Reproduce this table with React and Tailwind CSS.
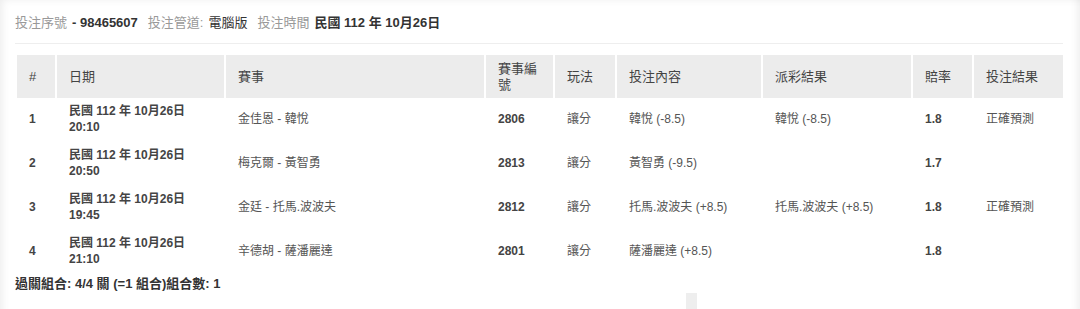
import React from "react";

const rows = [
  { no: 1, date: "民國 112 年 10月26日", time: "20:10", match: "金佳恩 - 韓悅", id: "2806", play: "讓分", bet: "韓悅 (-8.5)", payout: "韓悅 (-8.5)", odds: "1.8", result: "正確預測" },
  { no: 2, date: "民國 112 年 10月26日", time: "20:50", match: "梅克爾 - 黃智勇", id: "2813", play: "讓分", bet: "黃智勇 (-9.5)", payout: "", odds: "1.7", result: "" },
  { no: 3, date: "民國 112 年 10月26日", time: "19:45", match: "金廷 - 托馬.波波夫", id: "2812", play: "讓分", bet: "托馬.波波夫 (+8.5)", payout: "托馬.波波夫 (+8.5)", odds: "1.8", result: "正確預測" },
  { no: 4, date: "民國 112 年 10月26日", time: "21:10", match: "辛德胡 - 薩潘麗達", id: "2801", play: "讓分", bet: "薩潘麗達 (+8.5)", payout: "", odds: "1.8", result: "" },
];

const heads = [
  { label: "#", w: "w-[38px]" },
  { label: "日期", w: "w-[167px]" },
  { label: "賽事", w: "w-[258px]" },
  { label: "賽事編號", w: "w-[67px]" },
  { label: "玩法", w: "w-[60px]" },
  { label: "投注內容", w: "w-[144px]" },
  { label: "派彩結果", w: "w-[148px]" },
  { label: "賠率", w: "w-[59px]" },
  { label: "投注結果", w: "w-[89px]" },
];

export default function App() {
  const td = "h-[42px] pl-3 pr-1 pt-[1px] pb-[5px] align-middle text-[12px]";
  return (
    <div
      className="relative w-full h-[309px] overflow-hidden bg-white text-[13px] leading-4 text-[#555] shadow-[inset_8px_5px_8px_-6px_rgba(0,0,0,0.08),inset_-10px_0_8px_-8px_rgba(0,0,0,0.08)]"
      style={{ fontFamily: '"Liberation Sans", Arial, "Noto Sans CJK TC", sans-serif' }}
    >
      <div className="pl-[15px] pr-[15px] pt-[13px]">
        {/* bet summary */}
        <div className="flex items-center h-[20px] pb-[1px] text-[#999] whitespace-nowrap">
          <span>投注序號</span>
          <span className="ml-[5px] font-bold text-[#333]">- 98465607</span>
          <span className="ml-[10px]">投注管道:</span>
          <span className="ml-[5px] text-[#333]">電腦版</span>
          <span className="ml-[10px]">投注時間</span>
          <span className="ml-[5px] font-bold text-[#333]">民國 112 年 10月26日</span>
        </div>
        <div className="mt-[10px] h-px w-[1048px] bg-[#eee]" />

        <table className="mt-[9px] w-[1050px] table-fixed border-separate border-spacing-[2px]">
          <thead>
            <tr>
              {heads.map((h) => (
                <th key={h.label} className={`${h.w} h-[43px] bg-[#ececec] pl-3 pr-2 text-left align-middle font-normal text-[#444]`}>
                  {h.label}
                </th>
              ))}
            </tr>
          </thead>
          <tbody>
            {rows.map((r) => (
              <tr key={r.no}>
                <td className={`${td} font-bold text-[#444]`}>{r.no}</td>
                <td className={`${td} font-bold text-[#444]`}>
                  {r.date}
                  <br />
                  {r.time}
                </td>
                <td className={td}>{r.match}</td>
                <td className={`${td} font-bold text-[#444]`}>{r.id}</td>
                <td className={td}>{r.play}</td>
                <td className={td}>{r.bet}</td>
                <td className={td}>{r.payout}</td>
                <td className={`${td} font-bold text-[#444]`}>{r.odds}</td>
                <td className={td}>{r.result}</td>
              </tr>
            ))}
          </tbody>
        </table>

        <div className="mt-0 font-bold text-[#333]">過關組合: 4/4 關 (=1 組合)組合數: 1</div>
        <div className="mt-[1px] ml-[671px] h-[16px] w-[11px] bg-[#eee]" />
      </div>
    </div>
  );
}
